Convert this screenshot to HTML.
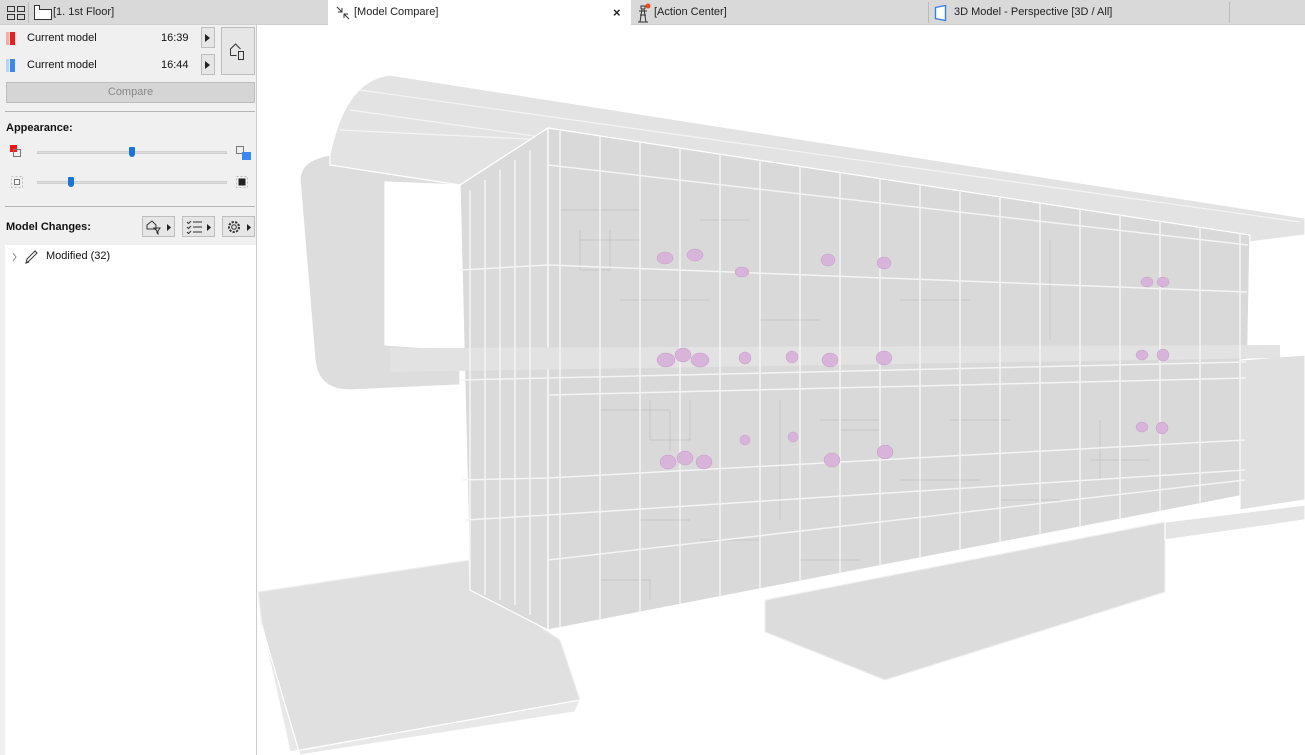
<!DOCTYPE html>
<html><head><meta charset="utf-8"><style>
*{margin:0;padding:0;box-sizing:border-box}
body{width:1305px;height:755px;overflow:hidden;background:#fff;font-family:"Liberation Sans",sans-serif;font-size:11px;color:#111;position:relative}
.tabbar{position:absolute;left:0;top:0;width:1305px;height:25px;background:#d9d9d9;border-bottom:1px solid #cfcfcf}
.tab{position:absolute;top:0;height:25px;line-height:25px;font-size:11px;color:#222}
.sep{position:absolute;top:2px;width:1px;height:21px;background:#bbb}
.panel{position:absolute;left:0;top:25px;width:257px;height:730px;background:#f0f0f0;border-right:1px solid #ccc}
.row{position:absolute;left:6px;height:20px;line-height:20px}
.sw{position:absolute;left:0;top:4px;width:5px;height:13px}
.btn{position:absolute;background:#e6e6e6;border:1px solid #bdbdbd}
.hr{position:absolute;left:5px;width:250px;height:1px;background:#b5b5b5}
.track{position:absolute;height:3px;background:#dcdcdc;border:1px solid #d0d0d0}
.thumb{position:absolute;width:6px;height:10px;background:#1a73d6;border-radius:1px 1px 3px 3px}
</style></head><body>
<div class="tabbar">
  <svg style="position:absolute;left:6px;top:5px" width="20" height="16"><g fill="none" stroke="#333" stroke-width="1"><rect x="1.5" y="1.5" width="7" height="5"/><rect x="11.5" y="1.5" width="7" height="5"/><rect x="1.5" y="9.5" width="7" height="5"/><rect x="11.5" y="9.5" width="7" height="5"/></g></svg>
  <div class="sep" style="left:28px"></div>
  <svg style="position:absolute;left:33px;top:4px" width="20" height="17"><path d="M1.5 15.5V1.5h5v4h12v10z" fill="#fff" stroke="#333"/></svg>
  <div class="tab" style="left:53px">[1. 1st Floor]</div>
  <div style="position:absolute;left:328px;top:0;width:303px;height:25px;background:#fff"></div>
  <svg style="position:absolute;left:336px;top:6px" width="14" height="14"><path d="M1 1l5 5M6 2v4H2M13 13l-5-5M8 12V8h4" fill="none" stroke="#333"/></svg>
  <div class="tab" style="left:354px">[Model Compare]</div>
  <div class="tab" style="left:613px;font-size:13px;font-weight:bold">×</div>
  <svg style="position:absolute;left:634px;top:3px" width="18" height="20"><path d="M4 19h10M6 19l2-13h2l2 13M5 8h8M6 12h6M7 6V3h4v3" fill="none" stroke="#333"/><circle cx="14" cy="3" r="2.5" fill="#f0461e"/></svg>
  <div class="tab" style="left:654px">[Action Center]</div>
  <div class="sep" style="left:928px"></div>
  <svg style="position:absolute;left:934px;top:5px" width="16" height="17"><path d="M1.5 2.5l10-2v15l-10-2z" fill="#fff" stroke="#3a7fe0" stroke-width="1.4"/></svg>
  <div class="tab" style="left:954px">3D Model - Perspective [3D / All]</div>
  <div class="sep" style="left:1229px"></div>
</div>

<div class="panel">
  <div class="row" style="top:3px;width:200px"><span class="sw" style="background:#f8aaa6;width:3px"></span><span class="sw" style="left:4px;background:#ef1c1c;width:5px"></span><span style="position:absolute;left:21px">Current model</span><span style="position:absolute;left:155px">16:39</span></div>
  <div class="row" style="top:30px;width:200px"><span class="sw" style="background:#b7d3fb;width:3px"></span><span class="sw" style="left:4px;background:#3c86f2;width:5px"></span><span style="position:absolute;left:21px">Current model</span><span style="position:absolute;left:155px">16:44</span></div>
  <div class="btn" style="left:201px;top:2px;width:14px;height:21px"><span style="position:absolute;left:3px;top:6px;border-left:5px solid #222;border-top:4px solid transparent;border-bottom:4px solid transparent"></span></div>
  <div class="btn" style="left:201px;top:29px;width:14px;height:21px"><span style="position:absolute;left:3px;top:6px;border-left:5px solid #222;border-top:4px solid transparent;border-bottom:4px solid transparent"></span></div>
  <div class="btn" style="left:221px;top:2px;width:34px;height:48px"><svg style="position:absolute;left:7px;top:15px" width="20" height="18"><path d="M1.5 12.5V6l5-5 5 5M1.5 12.5h6M9.5 8.5h5v8h-5z" fill="none" stroke="#333"/></svg></div>
  <div class="btn" style="left:6px;top:57px;width:249px;height:21px;background:#d5d5d5;color:#888;text-align:center;line-height:19px">Compare</div>
  <div class="hr" style="top:86px"></div>
  <div class="row" style="top:93px;font-weight:bold">Appearance:</div>
  <svg style="position:absolute;left:10px;top:120px" width="14" height="14"><rect x="0" y="0" width="7" height="7" fill="#f11"/><rect x="3.5" y="4.5" width="7" height="7" fill="none" stroke="#777"/></svg>
  <div class="track" style="left:37px;top:126px;width:190px"></div>
  <div class="thumb" style="left:129px;top:122px"></div>
  <svg style="position:absolute;left:235px;top:120px" width="18" height="18"><rect x="1.5" y="1.5" width="7" height="7" fill="none" stroke="#777"/><rect x="7" y="7" width="9" height="8" fill="#3c86f2"/></svg>
  <div class="track" style="left:37px;top:156px;width:190px"></div>
  <div class="thumb" style="left:68px;top:152px"></div>
  <svg style="position:absolute;left:11px;top:151px" width="14" height="14"><rect x="0.5" y="0.5" width="11" height="11" fill="none" stroke="#bbb" stroke-dasharray="2 2"/><rect x="3.5" y="3.5" width="5" height="5" fill="#fff" stroke="#777"/></svg>
  <svg style="position:absolute;left:236px;top:151px" width="14" height="14"><rect x="0.5" y="0.5" width="11" height="11" fill="none" stroke="#bbb" stroke-dasharray="2 2"/><rect x="2.5" y="2.5" width="7" height="7" fill="#222"/></svg>
  <div class="hr" style="top:181px"></div>
  <div class="row" style="top:192px;font-weight:bold">Model Changes:</div>
  <div class="btn" style="left:142px;top:191px;width:33px;height:21px"><svg style="position:absolute;left:2px;top:2px" width="28" height="16"><path d="M2 10V6l5-4 4 4v4zM9 9h6l-2 3v3l-1-1v-2z" fill="none" stroke="#333"/><path d="M22 5l4 3.5-4 3.5z" fill="#222"/></svg></div>
  <div class="btn" style="left:182px;top:191px;width:33px;height:21px"><svg style="position:absolute;left:2px;top:2px" width="28" height="16"><path d="M2 3l1.5 1.5L6 2M2 8l1.5 1.5L6 7M2 13l1.5 1.5L6 12M8 3h9M8 8h9M8 13h9" fill="none" stroke="#333"/><path d="M22 5l4 3.5-4 3.5z" fill="#222"/></svg></div>
  <div class="btn" style="left:222px;top:191px;width:33px;height:21px"><svg style="position:absolute;left:2px;top:2px" width="28" height="16"><circle cx="9" cy="8" r="5" fill="none" stroke="#333" stroke-dasharray="2.2 1.3" stroke-width="2"/><circle cx="9" cy="8" r="2.3" fill="none" stroke="#333"/><path d="M22 5l4 3.5-4 3.5z" fill="#222"/></svg></div>
  <div style="position:absolute;left:5px;top:220px;width:251px;height:510px;background:#fff"></div>
  <svg style="position:absolute;left:10px;top:225px" width="40" height="15"><path d="M3 3l3 4-3 4" fill="none" stroke="#888"/><path d="M16 13l1-4 8-8 2 2-8 8zM16 13l3-1" fill="none" stroke="#333"/></svg>
  <div class="row" style="top:221px;left:46px">Modified (32)</div>
</div>

<svg style="position:absolute;left:258px;top:25px" width="1047" height="730" viewBox="258 25 1047 730">
<g stroke="#fff" stroke-width="1.2">
<polygon points="258,592 470,560 500,600 560,640 580,700 290,752 262,625" fill="#e0e0e0" stroke="#efefef"/>
<polygon points="262,625 290,752 580,700 575,712 300,755 266,640" fill="#e8e8e8"/>
<polygon points="765,600 1165,522 1165,592 885,680 765,632" fill="#dcdcdc" stroke="#f0f0f0"/>
<polygon points="1165,522 1305,505 1305,520 1165,540" fill="#e4e4e4"/>
<path d="M300,180 Q300,160 330,155 L460,165 L460,185 L385,182 L385,345 L460,350 L460,385 L350,390 Q318,390 315,360 Z" fill="#dddddd"/>
<path d="M330,155 Q345,80 390,75 L1305,218 L1305,235 L1250,242 L548,128 L460,185 L330,165 Z" fill="#e3e3e3"/>
<path d="M360,90 L1300,222 M350,110 L1250,237 M340,130 L548,140" fill="none" stroke="#f4f4f4"/>
<polygon points="460,185 548,128 548,630 470,590" fill="#dadada"/>
<polygon points="548,128 1250,235 1245,495 548,630" fill="#d9d9d9"/>
<polygon points="1240,360 1305,355 1305,500 1240,510" fill="#e0e0e0"/>
<polygon points="390,348 1280,345 1280,358 390,372" fill="#e2e2e2" stroke="none"/>
<g fill="none" stroke="#c2c2c2" stroke-width="1" opacity="0.8">
<path d="M560,210h80M580,240h60v20M700,220h50M900,300h70M620,300h90M760,320h60M600,410h70v40M820,420h60v30M950,420h60M640,520h50M700,540h60M900,480h80M1000,500h60M1090,460h60M600,580h50v20M800,560h60"/>
<path d="M580,230v40h30v-40M650,400v40h40v-40M840,380v50h40v-50M1000,260v60M1050,240v100M760,240v100M780,400v120M920,400v120M1100,420v60"/>
</g>
<g fill="none" stroke="#f4f4f4" stroke-width="1.5">
<path d="M560,130V628M600,136V620M640,142V612M680,148V604M720,154V597M760,160V589M800,166V581M840,172V573M880,179V566M920,185V558M960,191V550M1000,197V542M1040,203V535M1080,209V527M1120,215V519M1160,221V511M1200,227V504M1240,233V496"/>
<path d="M548,165L1248,245M548,265L1247,292M548,378L1246,362M548,395L1246,378M548,478L1245,440M548,515L1245,470M548,560L1245,480"/>
<path d="M470,190V590M485,180V595M500,170V600M515,160V605M530,150V615M460,270L548,265M460,380L548,378M462,480L548,478M465,520L548,515"/>
</g>
</g>
<g fill="#d9b4da" stroke="#c49cc6" stroke-width="0.5">
<ellipse cx="665" cy="258" rx="8" ry="6"/><ellipse cx="695" cy="255" rx="8" ry="6"/><ellipse cx="742" cy="272" rx="7" ry="5"/><ellipse cx="828" cy="260" rx="7" ry="6"/><ellipse cx="884" cy="263" rx="7" ry="6"/><ellipse cx="1147" cy="282" rx="6" ry="5"/><ellipse cx="1163" cy="282" rx="6" ry="5"/>
<ellipse cx="666" cy="360" rx="9" ry="7"/><ellipse cx="683" cy="355" rx="8" ry="7"/><ellipse cx="700" cy="360" rx="9" ry="7"/><ellipse cx="745" cy="358" rx="6" ry="6"/><ellipse cx="792" cy="357" rx="6" ry="6"/><ellipse cx="830" cy="360" rx="8" ry="7"/><ellipse cx="884" cy="358" rx="8" ry="7"/><ellipse cx="1142" cy="355" rx="6" ry="5"/><ellipse cx="1163" cy="355" rx="6" ry="6"/>
<ellipse cx="668" cy="462" rx="8" ry="7"/><ellipse cx="685" cy="458" rx="8" ry="7"/><ellipse cx="704" cy="462" rx="8" ry="7"/><ellipse cx="745" cy="440" rx="5" ry="5"/><ellipse cx="793" cy="437" rx="5" ry="5"/><ellipse cx="832" cy="460" rx="8" ry="7"/><ellipse cx="885" cy="452" rx="8" ry="7"/><ellipse cx="1142" cy="427" rx="6" ry="5"/><ellipse cx="1162" cy="428" rx="6" ry="6"/>
</g>
</svg>
</body></html>
